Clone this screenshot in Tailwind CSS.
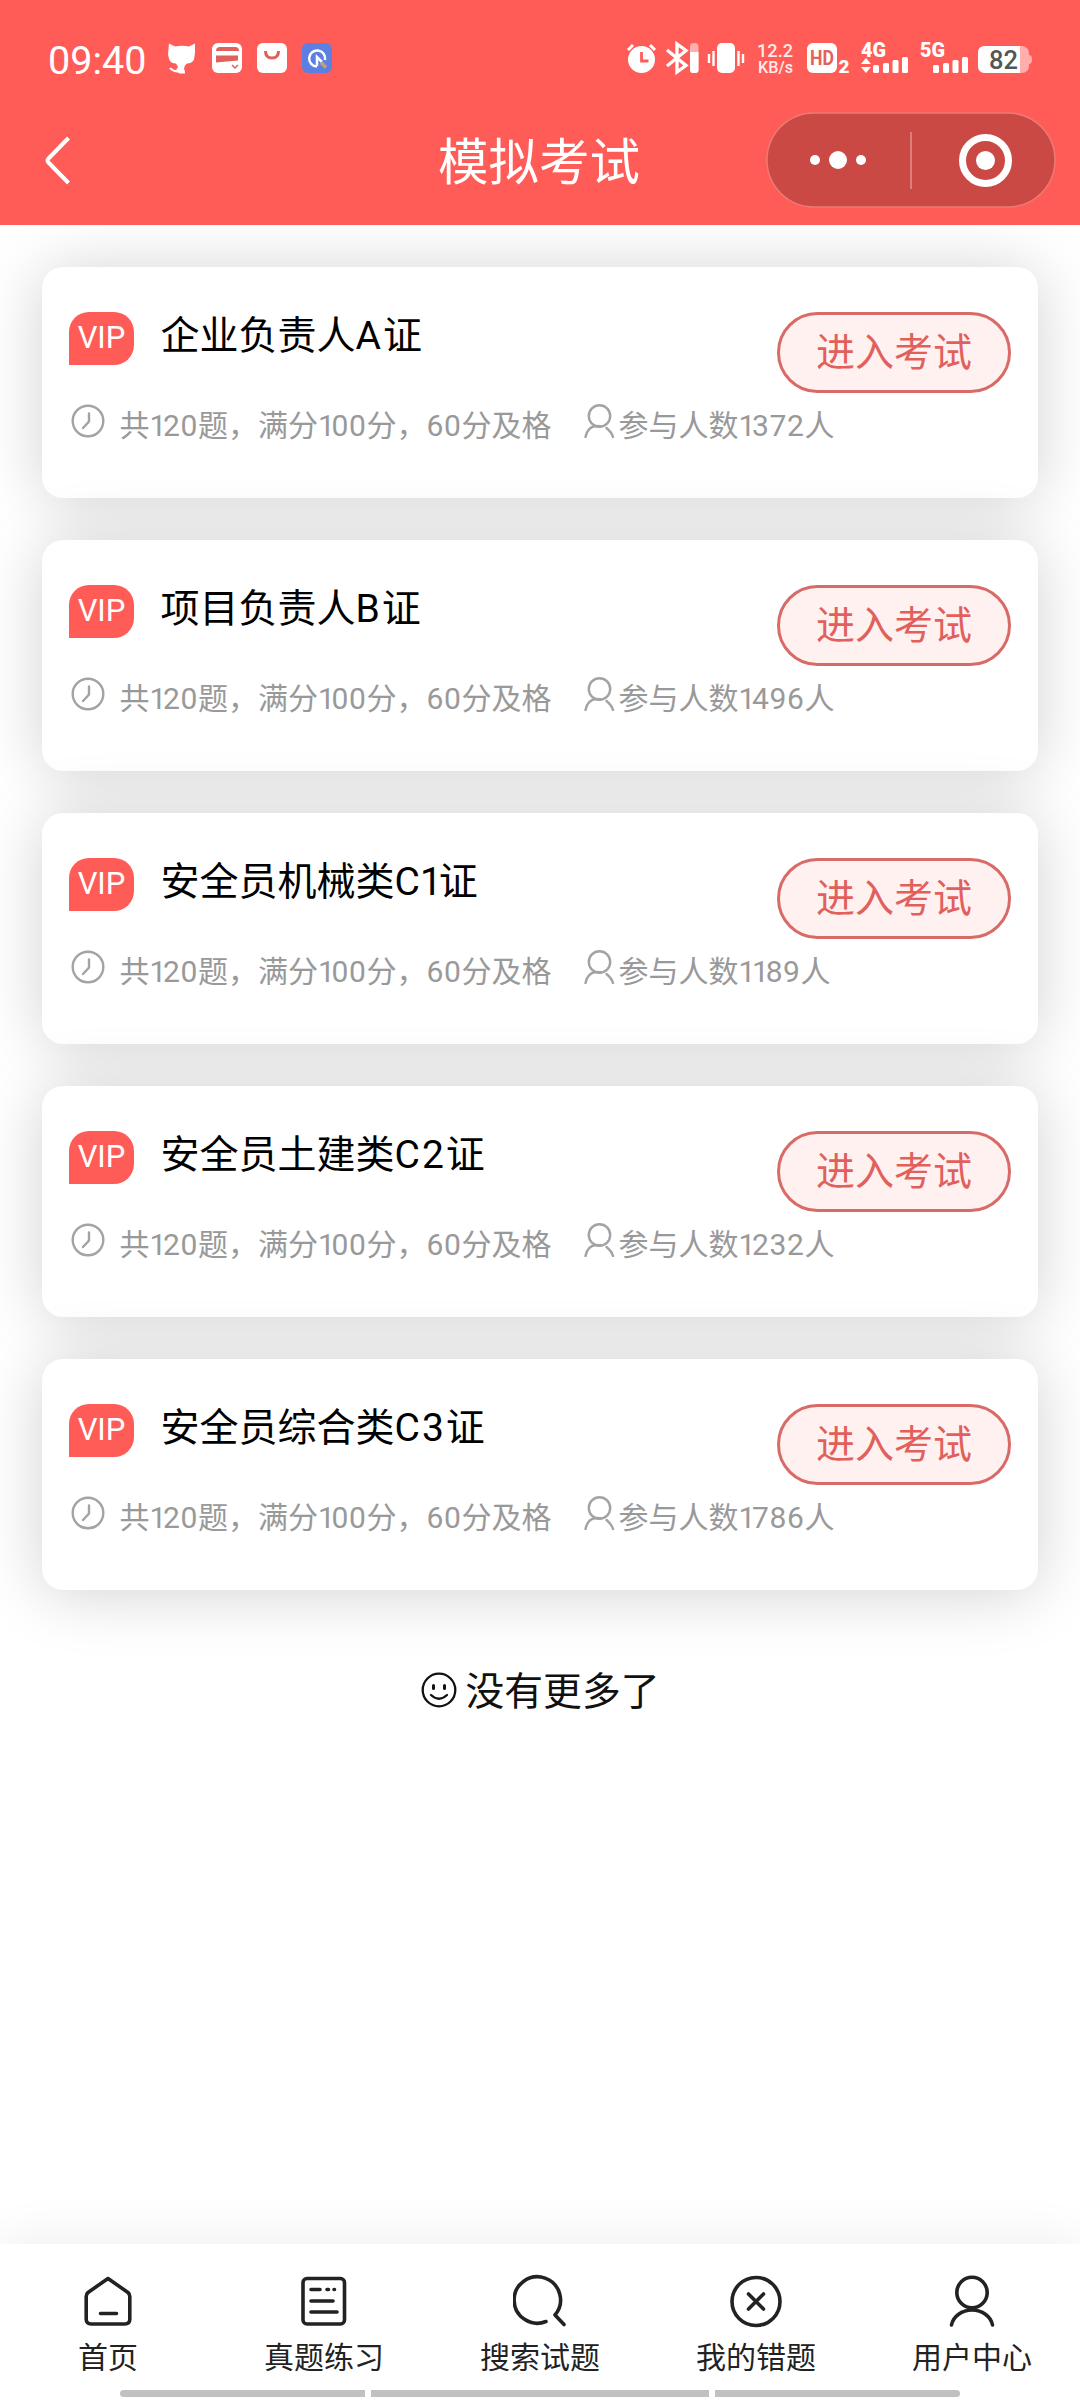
<!DOCTYPE html>
<html lang="zh-CN">
<head>
<meta charset="utf-8">
<title>模拟考试</title>
<script src="https://cdn.jsdelivr.net/npm/@tailwindcss/browser@4"></script>
</head>
<body class="w-[1080px] h-[2400px] overflow-hidden bg-white flex flex-col font-[Roboto,'Noto_Sans_CJK_SC',sans-serif]">
<header class="h-[225px] shrink-0 bg-[#ff5c57] text-white flex flex-col relative z-10">
  <div class="h-[96px] flex items-start justify-between">
    <div class="flex items-start pl-12 pt-[34px]">
      <span class="w-[120px] text-[39.5px] leading-[54px]">09:40</span>
      <svg class="mt-[9px]" width="166" height="32" viewBox="168 43 166 32" fill="none">
        <path d="M169 43.500l6 3q7-1.500 14 0l6-3v9l-1 7q-2 4-7 4l-2 2-1 3q1 2 1 5h-5q-1 0-2-1-5 0-9-4l2-1q3 3 5 2.500l2-3-2-3.500q-6 0-7-5l-1-4z" fill="#fff"/>
        <rect x="212" y="43" width="30" height="30" rx="6" fill="#fff"/>
        <path d="M216 51q0-4 4-4h15q4 0 4 4zM216 55.500h22v5l-22 2z" fill="#e0605b"/>
        <path d="M232 65l3 3 3-3" stroke="#e0605b" stroke-width="1.500"/>
        <rect x="257" y="43" width="30" height="30" rx="6" fill="#fff"/>
        <path d="M265.500 51q0 7 6.500 7t6.500-7" stroke="#e0605b" stroke-width="3"/>
        <rect x="302" y="43" width="30" height="30" rx="6" fill="#5b80e2"/>
        <path d="M317 66.500a8 8 0 1 1 8-6.500M317 66v-9l5 5" stroke="#fff" stroke-width="2.500"/>
        <path d="M321 62.500l5 5" stroke="#c0a080" stroke-width="3.500"/>
      </svg>
    </div>
    <svg class="mt-5" width="480" height="70" viewBox="600 20 480 70" fill="#fff">
      <circle cx="641.500" cy="59.500" r="13.500"/><path d="M628 50l5-5M655 50l-5-5" stroke="#fff" stroke-width="3"/><path d="M641.500 52v9h7" fill="none" stroke="#ff5c57" stroke-width="2.800"/>
      <path d="M667 50l19 15.500-9 6.500V44l9 6.500L667 66" fill="none" stroke="#fff" stroke-width="3.300"/>
      <rect x="690" y="43" width="8.500" height="30" rx="3.500" opacity=".5"/><path d="M690 52h8.500v18q0 3-3 3h-2.500q-3 0-3-3z"/>
      <rect x="717" y="43" width="18" height="30" rx="5"/><path d="M713.500 51v15M709 54v9M738.500 51v15M743 54v9" stroke="#fff" stroke-width="2.400"/>
      <text x="757" y="57" font-size="19" font-weight="500" textLength="36" lengthAdjust="spacingAndGlyphs" opacity=".88">12.2</text>
      <text x="758" y="73" font-size="17" font-weight="500" textLength="35" lengthAdjust="spacingAndGlyphs" opacity=".88">KB/s</text>
      <rect x="807" y="43" width="30" height="30" rx="6"/><text x="810" y="65" font-size="20" font-weight="700" fill="#e4605c" textLength="24" lengthAdjust="spacingAndGlyphs">HD</text>
      <text x="838.500" y="73" font-size="18" font-weight="900" textLength="11" lengthAdjust="spacingAndGlyphs">2</text>
      <text x="861" y="57" font-size="20" font-weight="900" textLength="25" lengthAdjust="spacingAndGlyphs">4G</text>
      <path d="M861 64l5-6 5 6zM861 67l5 6 5-6z"/>
      <g id="bars"><rect x="873" y="65" width="6" height="8" rx="1.500"/><rect x="883" y="63" width="6" height="10" rx="1.500"/><rect x="892.500" y="60" width="6" height="13" rx="1.500"/><rect x="902" y="57" width="6" height="16" rx="1.500"/></g>
      <text x="920" y="57" font-size="20" font-weight="900" textLength="25" lengthAdjust="spacingAndGlyphs">5G</text>
      <use href="#bars" x="60"/>
      <rect x="978" y="46" width="51" height="27" rx="7" opacity=".5"/><path d="M1029 55q3 0 3 4.500t-3 4.500z" opacity=".5"/>
      <path d="M985 46h35v27h-35q-7 0-7-7V53q0-7 7-7z"/>
      <text x="989" y="69" font-size="25" font-weight="500" fill="#555" textLength="29" lengthAdjust="spacingAndGlyphs">82</text>
    </svg>
  </div>
  <div class="flex items-start">
    <svg class="ml-[43px] mt-10" width="28" height="50" viewBox="0 0 28 50" fill="none" stroke="#fff" stroke-width="4"><path d="M25.500 2L5.500 22.500q-2 2 0 4L25.500 47"/></svg>
    <h1 class="ml-[367px] w-[328px] mt-[31px] text-[50.5px] leading-[72px]">模拟考试</h1>
    <svg class="mt-4" width="290" height="96" viewBox="0 0 290 96" fill="#fff">
      <rect x="1" y="1" width="288" height="94" rx="47" fill="#cb4945" stroke="#ec7a76" stroke-width="1.500"/>
      <circle cx="49" cy="48" r="5"/><circle cx="72" cy="48" r="9"/><circle cx="95" cy="48" r="5"/>
      <path d="M145 20v57" stroke="#e0837f" stroke-width="1.800"/>
      <circle cx="219.500" cy="48.500" r="23" fill="none" stroke="#fff" stroke-width="7"/><circle cx="219.500" cy="48.500" r="9.500"/>
    </svg>
  </div>
</header>

<main id="list" class="flex-1 flex flex-col gap-[42px] px-[42px] pt-[42px]"></main>

<nav class="h-[156px] shrink-0 bg-white shadow-[0_0_50px_rgba(0,0,0,0.08)] text-[#222] flex flex-col relative">
  <div class="grid grid-cols-5 pt-[29px] text-[30px] leading-9">
    <div class="flex flex-col items-center gap-[11px]"><svg width="54" height="56" viewBox="0 0 54 56" fill="none" stroke="#222" stroke-width="3.600" stroke-linecap="round" stroke-linejoin="round"><path d="M27 5.500L47 19.500q1.800 1.500 1.800 4V46q0 5-5 5H10.200q-5 0-5-5V23.500q0-2.500 1.800-4zM19.500 40.500h16"/></svg>首页</div>
    <div class="flex flex-col items-center gap-[11px]"><svg width="54" height="56" viewBox="0 0 54 56" fill="none" stroke="#222" stroke-width="3.600" stroke-linecap="round"><rect x="6" y="5.500" width="41.500" height="45.500" rx="4"/><path d="M14 16.500h9M30 16.500h1.500M37 16.500h.5M14 28h22M14 39h26"/></svg>真题练习</div>
    <div class="flex flex-col items-center gap-[11px]"><svg width="54" height="56" viewBox="0 0 54 56" fill="none" stroke="#222" stroke-width="3.600" stroke-linecap="round" stroke-linejoin="round"><path d="M33 48.500A23.200 23.200 0 1 1 42 42l9 9.500"/></svg>搜索试题</div>
    <div class="flex flex-col items-center gap-[11px]"><svg width="54" height="56" viewBox="0 0 54 56" fill="none" stroke="#222" stroke-width="3.600" stroke-linecap="round"><circle cx="27" cy="28.500" r="24"/><path d="M19.500 21l15 15M34.500 21l-15 15"/></svg>我的错题</div>
    <div class="flex flex-col items-center gap-[11px]"><svg width="54" height="56" viewBox="0 0 54 56" fill="none" stroke="#222" stroke-width="3.600" stroke-linecap="round"><circle cx="27" cy="19.500" r="15.200"/><path d="M6.500 52a20.800 18 0 0 1 41 0"/></svg>用户中心</div>
  </div>
  <div class="flex gap-1.5 px-[120px] mt-3.5">
    <i class="w-[245px] h-[7px] rounded-l-full bg-[#c1c1c1]"></i><i class="flex-1 h-[7px] bg-[#c1c1c1]"></i><i class="w-[245px] h-[7px] rounded-r-full bg-[#c1c1c1]"></i>
  </div>
</nav>

<script>
const exams = [['企业负责人A证', 1372], ['项目负责人B证', 1496], ['安全员机械类C1证', 1189], ['安全员土建类C2证', 1232], ['安全员综合类C3证', 1786]];
const kernTitle = (s) => s.replace(/[A-Z0-9]/g, (c) => c === '1' ? `<span class="-ml-0.5 tracking-[-3px]">1</span>` : `<span class="tracking-[2px]">${c}</span>`);
const kernMeta = (s) => s.replace(/\d/g, (c) => c === '1' ? `<span class="tracking-[-3.3px]">1</span>` : `<span class="tracking-[0.6px]">${c}</span>`);
document.getElementById('list').innerHTML = exams.map(([name, count]) => `
  <section class="h-[231px] shrink-0 rounded-[21px] bg-white shadow-[0_3px_64px_rgba(0,0,0,0.18)] px-[27px] pt-[45px]">
    <div class="flex h-[81px] items-start">
      <span class="w-[65px] h-[53px] rounded-[20px] rounded-bl-none bg-[#ff5c57] text-white text-[31px] leading-[52px] text-center">VIP</span>
      <h2 class="ml-[26.5px] -mt-0.5 flex-1 text-[39px] leading-[52px] text-black">${kernTitle(name)}</h2>
      <button class="w-[234px] h-[81px] rounded-full border-3 border-[#d86a67] bg-[#fff1f0] text-[#e2605c] text-[39px] leading-[72px]">进入考试</button>
    </div>
    <div class="flex h-10 mt-[9px] text-[30px] leading-[47px] text-[#999]">
      <svg class="ml-[2px] mt-[2px]" width="34" height="34" viewBox="0 0 34 34" fill="none" stroke="#a3a3a3" stroke-width="2.400" stroke-linecap="round"><circle cx="17" cy="17" r="15.300"/><path d="M18 9.500v8L12 24"/></svg>
      <span class="ml-[14.5px] w-[464px] whitespace-nowrap">${kernMeta('共120题，满分100分，60分及格')}</span>
      <svg class="mt-[2px]" width="31" height="34" viewBox="0 0 31 34" fill="none" stroke="#a3a3a3" stroke-width="2.400" stroke-linecap="round"><circle cx="15.500" cy="12" r="10.700"/><path d="M1.500 33q2-10 10-11l5 .3M22.500 24q5 4 6.500 9"/></svg>
      <span class="ml-1 whitespace-nowrap">${kernMeta('参与人数' + count + '人')}</span>
    </div>
  </section>`).join('') + `
  <div class="flex items-center justify-center gap-[9px] mt-[33px] h-[54px] text-[38.800px] leading-[54px] text-[#111]">
    <svg class="-mt-1" width="36" height="36" viewBox="0 0 36 36" fill="none" stroke="#111" stroke-width="2.300" stroke-linecap="round"><circle cx="18" cy="18" r="16.300"/><path d="M12.500 13.500v3M23.500 13.500v3" stroke-width="3"/><path d="M10 23q8 7.500 16 0"/></svg><span>没有更多了</span>
  </div>`;
</script>
</body>
</html>
